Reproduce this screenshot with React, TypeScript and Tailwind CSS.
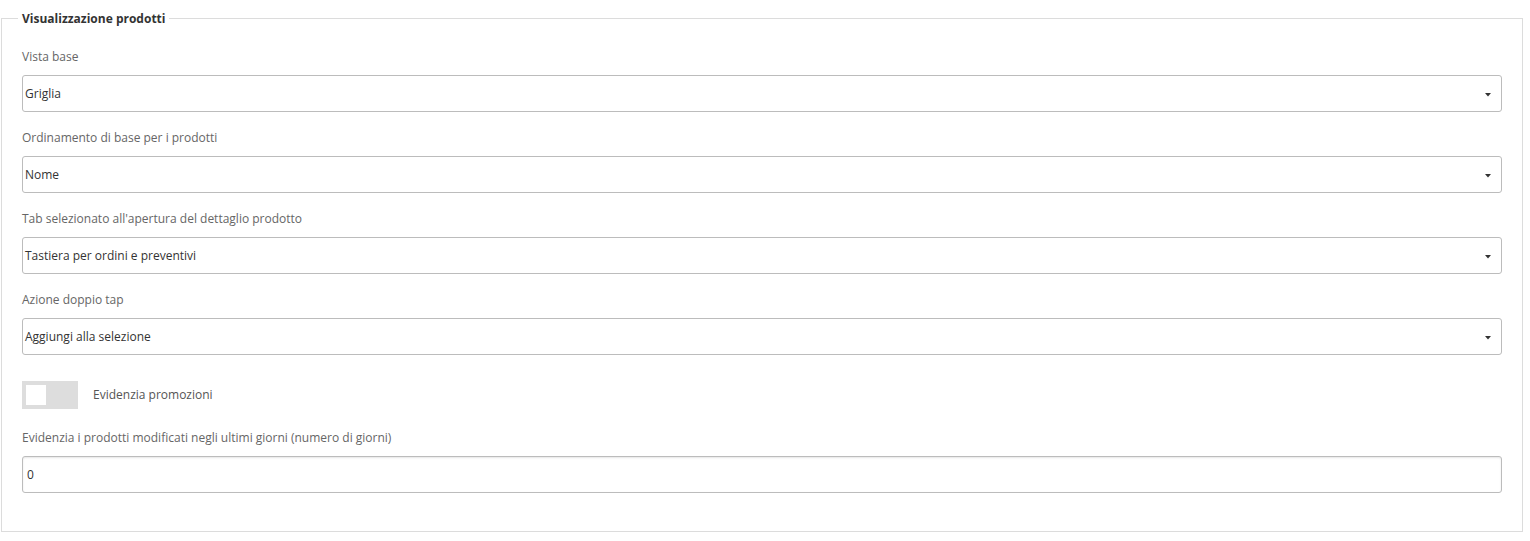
import { ReactNode } from "react";

const font = { fontFamily: '"Open Sans", "Noto Sans", sans-serif' };

function Caret() {
  return (
    <svg width="6" height="4" viewBox="0 0 6 4" className="absolute right-[10px] top-[17px]">
      <path d="M0 0h6L3 3.5z" fill="#333" />
    </svg>
  );
}

function Field({ label, children }: { label: string; children: ReactNode }) {
  return (
    <div className="flex flex-col">
      <label className="text-[12px] leading-[17px] text-[#666] mb-[10px]">{label}</label>
      {children}
    </div>
  );
}

function Select({ value }: { value: string }) {
  return (
    <div className="relative h-[37px] w-full rounded-[3px] border border-[#bcbcbc] bg-white flex items-center pl-[2px] text-[12px] text-[#333]">
      {value}
      <Caret />
    </div>
  );
}

export default function App() {
  return (
    <div className="w-[1530px] h-[541px] bg-white" style={font}>
      <fieldset className="mt-[10px] ml-[1px] w-[1522px] border border-[#dcdcdc] px-[20px] pb-[38px]">
        <legend className="-ml-[4px] px-[4px] text-[12px] leading-[17px] font-bold text-[#333]">
          Visualizzazione prodotti
        </legend>
        <div className="flex flex-col gap-[17px] pt-[21px]">
          <Field label="Vista base">
            <Select value="Griglia" />
          </Field>
          <Field label="Ordinamento di base per i prodotti">
            <Select value="Nome" />
          </Field>
          <Field label="Tab selezionato all'apertura del dettaglio prodotto">
            <Select value="Tastiera per ordini e preventivi" />
          </Field>
          <Field label="Azione doppio tap">
            <Select value="Aggiungi alla selezione" />
          </Field>
        </div>
        <div className="flex items-center gap-[15px] mt-[26px]">
          <div className="w-[56px] h-[28px] bg-[#dddddd] p-[4px]">
            <div className="w-[20px] h-[20px] bg-white" />
          </div>
          <span className="text-[12px] text-[#555]">Evidenzia promozioni</span>
        </div>
        <div className="mt-[20px]">
          <Field label="Evidenzia i prodotti modificati negli ultimi giorni (numero di giorni)">
            <div className="h-[37px] w-full rounded-[3px] border border-[#bcbcbc] bg-white shadow-[inset_0_1px_2px_rgba(0,0,0,0.1)] flex items-center pl-[4px] text-[12px] text-[#333]">
              0
            </div>
          </Field>
        </div>
      </fieldset>
    </div>
  );
}
